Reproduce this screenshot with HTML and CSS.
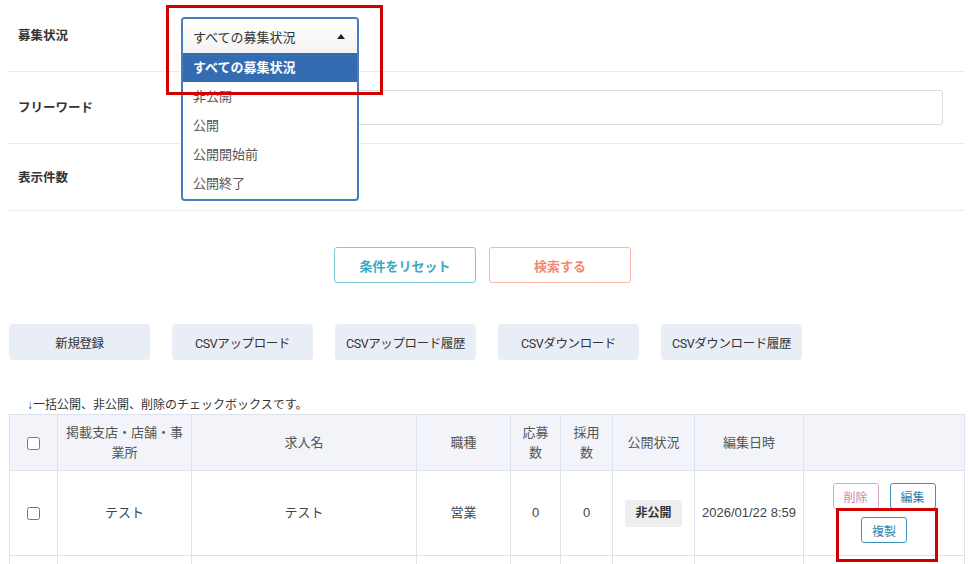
FILE: index.html
```html
<!DOCTYPE html>
<html lang="ja">
<head>
    <meta charset="UTF-8">
    <meta name="viewport" content="width=device-width, initial-scale=1.0">
    <title>求人一覧</title>
    <link rel="stylesheet" href="styles.css">
</head>
<body>
    <div class="page">
        <div class="search-form">
            <div class="form-row row-status">
                <div class="form-label">募集状況</div>
                <div class="form-field">
                    <div class="dropdown">
                        <div class="dropdown-head">
                            <span>すべての募集状況</span>
                            <span class="arrow"></span>
                        </div>
                        <ul class="dropdown-list">
                            <li class="selected">すべての募集状況</li>
                            <li>非公開</li>
                            <li>公開</li>
                            <li>公開開始前</li>
                            <li>公開終了</li>
                        </ul>
                    </div>
                </div>
            </div>
            <div class="form-row row-word">
                <div class="form-label">フリーワード</div>
                <div class="form-field">
                    <input type="text" class="text-input">
                </div>
            </div>
            <div class="form-row row-count">
                <div class="form-label">表示件数</div>
                <div class="form-field"></div>
            </div>
        </div>

        <div class="search-buttons">
            <button class="btn-reset">条件をリセット</button>
            <button class="btn-search">検索する</button>
        </div>

        <div class="action-buttons">
            <button>新規登録</button>
            <button>CSVアップロード</button>
            <button>CSVアップロード履歴</button>
            <button>CSVダウンロード</button>
            <button>CSVダウンロード履歴</button>
        </div>

        <p class="note">↓一括公開、非公開、削除のチェックボックスです。</p>

        <table class="job-table">
            <colgroup>
                <col style="width: 48px">
                <col style="width: 134px">
                <col style="width: 225px">
                <col style="width: 94px">
                <col style="width: 50px">
                <col style="width: 52px">
                <col style="width: 82px">
                <col style="width: 109px">
                <col style="width: 161px">
            </colgroup>
            <thead>
                <tr>
                    <th><input type="checkbox"></th>
                    <th>掲載支店・店舗・事業所</th>
                    <th>求人名</th>
                    <th>職種</th>
                    <th>応募数</th>
                    <th>採用数</th>
                    <th>公開状況</th>
                    <th>編集日時</th>
                    <th></th>
                </tr>
            </thead>
            <tbody>
                <tr>
                    <td><input type="checkbox"></td>
                    <td>テスト</td>
                    <td>テスト</td>
                    <td>営業</td>
                    <td>0</td>
                    <td>0</td>
                    <td><span class="badge">非公開</span></td>
                    <td class="date">2026/01/22 8:59</td>
                    <td>
                        <div class="row-actions">
                            <button class="btn-delete">削除</button>
                            <button class="btn-edit">編集</button>
                            <button class="btn-edit">複製</button>
                        </div>
                    </td>
                </tr>
                <tr class="next-row">
                    <td></td>
                    <td></td>
                    <td></td>
                    <td></td>
                    <td></td>
                    <td></td>
                    <td></td>
                    <td></td>
                    <td></td>
                </tr>
            </tbody>
        </table>
    </div>

    <!-- 注釈の赤枠 -->
    <div class="mark mark-select"></div>
    <div class="mark mark-copy"></div>
</body>
</html>
```

FILE: styles.css
```css
body {
    font-family: 'Liberation Sans', 'Noto Sans CJK JP', sans-serif;
    font-size: 13px;
    color: #333;
    background-color: #fff;
    margin: 0;
}

.page {
    padding: 0 8px;
}

.form-row {
    display: flex;
    align-items: center;
    height: 71px;
    border-bottom: 1px solid #ebebeb;
}

.row-count {
    height: 66px;
}

.form-label {
    width: 163px;
    padding-left: 10px;
    padding-bottom: 2px;
    font-weight: bold;
    font-size: 12.5px;
    color: #333;
}

.form-field {
    flex: 1;
    position: relative;
    height: 100%;
    display: flex;
    align-items: center;
    padding-right: 21px;
}

.text-input {
    width: 100%;
    height: 35px;
    box-sizing: border-box;
    border: 1px solid #dcdcdc;
    border-radius: 3px;
    margin: 0;
}

.dropdown {
    position: absolute;
    top: 17px;
    left: 0;
    width: 178px;
    box-sizing: border-box;
    border: 2px solid #4a7bbd;
    border-radius: 4px;
    background-color: #fff;
    z-index: 5;
    overflow: hidden;
}

.dropdown-head {
    display: flex;
    justify-content: space-between;
    align-items: center;
    height: 34px;
    padding: 0 12px 0 10px;
    background: linear-gradient(#ffffff, #f3f3f3);
    font-size: 13px;
    color: #333;
}

.arrow {
    width: 0;
    height: 0;
    border-left: 4px solid transparent;
    border-right: 4px solid transparent;
    border-bottom: 5px solid #222;
}

.dropdown-list {
    list-style: none;
    margin: 0;
    padding: 0 0 1px;
}

.dropdown-list li {
    height: 29px;
    line-height: 29px;
    padding-left: 10px;
    font-size: 13px;
    color: #555;
}

.dropdown-list li.selected {
    background-color: #336cb0;
    color: #fff;
    font-weight: bold;
}

.search-buttons {
    display: flex;
    justify-content: center;
    gap: 13px;
    margin-top: 36px;
    padding-right: 7px;
}

.search-buttons button {
    width: 142px;
    height: 36px;
    background-color: #fff;
    border-radius: 3px;
    font-family: inherit;
    font-weight: bold;
    font-size: 13px;
    cursor: pointer;
}

.btn-reset {
    border: 1.5px solid #7fcbd9;
    color: #3aa9c0;
}

.btn-search {
    border: 1.5px solid #ffb5a5;
    color: #f7876c;
}

.action-buttons {
    display: flex;
    gap: 22px;
    margin-top: 41px;
    padding-left: 1px;
}

.action-buttons button {
    width: 141px;
    height: 36px;
    border: none;
    border-radius: 4px;
    background-color: #e9eef6;
    color: #333;
    font-family: 'Roboto', 'Noto Sans CJK JP', sans-serif;
    font-size: 12.5px;
    letter-spacing: -0.4px;
    cursor: pointer;
}

.note {
    margin: 37px 0 0 19px;
    font-size: 12px;
    line-height: 17px;
    color: #333;
}

.job-table {
    width: 956px;
    table-layout: fixed;
    border-collapse: collapse;
    margin-left: 1px;
}

.job-table th,
.job-table td {
    border: 1px solid #dde3ec;
    padding: 0 8px;
    text-align: center;
    font-weight: normal;
    line-height: 20px;
    color: #444;
}

.job-table th {
    height: 55px;
    background-color: #f2f4f9;
    color: #555;
}

.job-table td {
    height: 84px;
}

.job-table td.date {
    padding: 0 2px;
    white-space: nowrap;
}

.job-table input[type="checkbox"] {
    width: 13px;
    height: 13px;
    margin: 0;
    vertical-align: middle;
}

.badge {
    display: inline-block;
    width: 57px;
    height: 27px;
    line-height: 27px;
    background-color: #eeeeee;
    border-radius: 3px;
    font-weight: bold;
    font-size: 12px;
    color: #333;
}

.row-actions {
    display: flex;
    flex-wrap: wrap;
    justify-content: center;
    gap: 8px 11px;
    width: 104px;
    margin: 0 auto;
}

.row-actions button {
    width: 46px;
    height: 26px;
    padding: 0;
    background-color: #fff;
    border-radius: 3px;
    font-family: inherit;
    font-size: 12px;
    cursor: pointer;
}

.btn-delete {
    border: 1px solid #dba6cb;
    color: #c985b6;
}

.btn-edit {
    border: 1px solid #3f93b8;
    color: #2d82a9;
}

.mark {
    position: absolute;
    border: 3px solid #d10000;
    box-sizing: border-box;
    z-index: 10;
}

.mark-select {
    left: 166px;
    top: 5px;
    width: 217px;
    height: 90px;
}

.mark-copy {
    left: 836px;
    top: 508px;
    width: 102px;
    height: 54px;
}
```
